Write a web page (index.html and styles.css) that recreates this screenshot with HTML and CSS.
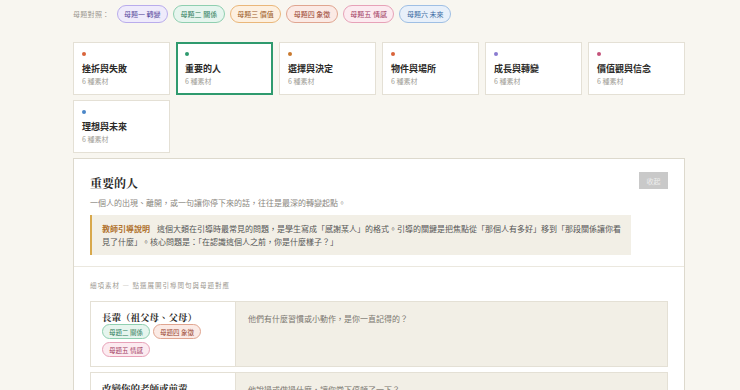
FILE: index.html
```html
<!DOCTYPE html>
<html lang="zh-Hant">
<head>
  <meta charset="UTF-8" />
  <title>素材分類</title>
  <link rel="stylesheet" href="styles.css">
</head>
<body>

<div class="page">

  <div class="legend">
    <span class="legend-label">母題對照：</span>
    <span class="chip m1">母題一 轉變</span>
    <span class="chip m2">母題二 關係</span>
    <span class="chip m3">母題三 價值</span>
    <span class="chip m4">母題四 象徵</span>
    <span class="chip m5">母題五 情感</span>
    <span class="chip m6">母題六 未來</span>
  </div>

  <div class="cat-grid">
    <div class="cat-card">
      <span class="dot dot-red"></span>
      <div class="cat-title">挫折與失敗</div>
      <div class="cat-sub">6 種素材</div>
    </div>
    <div class="cat-card active">
      <span class="dot dot-green"></span>
      <div class="cat-title">重要的人</div>
      <div class="cat-sub">6 種素材</div>
    </div>
    <div class="cat-card">
      <span class="dot dot-orange"></span>
      <div class="cat-title">選擇與決定</div>
      <div class="cat-sub">6 種素材</div>
    </div>
    <div class="cat-card">
      <span class="dot dot-red"></span>
      <div class="cat-title">物件與場所</div>
      <div class="cat-sub">6 種素材</div>
    </div>
    <div class="cat-card">
      <span class="dot dot-purple"></span>
      <div class="cat-title">成長與轉變</div>
      <div class="cat-sub">6 種素材</div>
    </div>
    <div class="cat-card">
      <span class="dot dot-pink"></span>
      <div class="cat-title">價值觀與信念</div>
      <div class="cat-sub">6 種素材</div>
    </div>
    <div class="cat-card">
      <span class="dot dot-blue"></span>
      <div class="cat-title">理想與未來</div>
      <div class="cat-sub">6 種素材</div>
    </div>
  </div>

  <section class="panel">
    <div class="panel-head">
      <div class="head-main">
        <h2 class="panel-title">重要的人</h2>
        <p class="panel-desc">一個人的出現、離開，或一句讓你停下來的話，往往是最深的轉變起點。</p>
        <div class="note"><strong class="note-label">教師引導說明</strong><span class="note-text">這個大類在引導時最常見的問題，是學生寫成「感謝某人」的格式。引導的關鍵是把焦點從「那個人有多好」移到「那段關係讓你看見了什麼」。核心問題是：「在認識這個人之前，你是什麼樣子？」</span></div>
      </div>
      <button class="close-btn">收起</button>
    </div>

    <div class="panel-body">
      <div class="section-label">細項素材 — 點選展開引導問句與母題對應</div>

      <div class="item">
        <div class="item-left">
          <div class="item-title">長輩（祖父母、父母）</div>
          <div class="item-chips">
            <span class="chip small m2">母題二 關係</span>
            <span class="chip small m4">母題四 象徵</span>
            <span class="chip small m5">母題五 情感</span>
          </div>
        </div>
        <div class="item-right">他們有什麼習慣或小動作，是你一直記得的？</div>
      </div>

      <div class="item">
        <div class="item-left">
          <div class="item-title">改變你的老師或前輩</div>
          <div class="item-chips">
            <span class="chip small m1">母題一 轉變</span>
            <span class="chip small m2">母題二 關係</span>
          </div>
        </div>
        <div class="item-right">他說過或做過什麼，讓你當下停頓了一下？</div>
      </div>
    </div>
  </section>

</div>

</body>
</html>
```

FILE: styles.css
```css
:root {
  --sans: "Noto Sans CJK TC", "Noto Sans", sans-serif;
  --serif: "Noto Serif CJK TC", "Liberation Serif", "Noto Sans CJK TC", serif;
  --bg: #f8f6f0;
  --line: #e4e0d5;
  --muted: #8a8680;
  --ink: #2b2a28;
  --cream: #f2efe6;
}
body {
  margin: 0;
  background: var(--bg);
  font-family: var(--sans);
  color: var(--ink);
}
.page {
  width: 612px;
  padding: 5px 0 0 73px;
}

/* legend */
.legend {
  display: flex;
  align-items: center;
  gap: 5px;
  height: 18px;
}
.legend-label {
  font-size: 7px;
  color: #9c9890;
  margin-right: 2px;
  letter-spacing: 0.3px;
}
.chip {
  display: inline-flex;
  align-items: center;
  height: 18px;
  box-sizing: border-box;
  padding: 0 6.5px;
  border: 1px solid;
  border-radius: 10px;
  font-size: 7px;
  white-space: nowrap;
}
.chip.small {
  height: 15px;
  padding: 0 6px;
  font-size: 6.5px;
}
.m1 { background: #efebfb; border-color: #b9acec; color: #5b4b9e; }
.m2 { background: #e6f5ee; border-color: #8fcfb0; color: #2e7d5a; }
.m3 { background: #fdf0e0; border-color: #eab77a; color: #9a5a1e; }
.m4 { background: #fbeae5; border-color: #e0a590; color: #9a4530; }
.m5 { background: #fcebf0; border-color: #e7a2b8; color: #a23c62; }
.m6 { background: #e8f0fa; border-color: #9fbfe4; color: #3a6aa3; }

/* categories */
.cat-grid {
  display: grid;
  grid-template-columns: repeat(6, 1fr);
  gap: 5px 6px;
  margin-top: 19px;
}
.cat-card {
  height: 53px;
  box-sizing: border-box;
  padding: 9px 8px 0;
  background: #fff;
  border: 1px solid var(--line);
}
.cat-card.active {
  border: 2px solid #2f9a6e;
  padding: 8px 7px 0;
}
.dot {
  display: block;
  width: 4px;
  height: 4px;
  border-radius: 50%;
  margin-bottom: 6px;
}
.dot-red { background: #d9643a; }
.dot-green { background: #2f9a6e; }
.dot-orange { background: #c9792f; }
.dot-purple { background: #8a7bd0; }
.dot-pink { background: #c4527a; }
.dot-blue { background: #4a86c8; }
.cat-title {
  font-size: 9px;
  font-weight: 700;
  line-height: 13px;
}
.cat-sub {
  font-size: 7px;
  color: #a29e97;
  line-height: 11px;
  margin-top: 1px;
}

/* panel */
.panel {
  margin-top: 5px;
  background: #fff;
  border: 1px solid #ddd9cd;
}
.panel-head {
  display: flex;
  align-items: flex-start;
  gap: 8px;
  padding: 13px 16px 11px 16px;
  border-bottom: 1px solid #ebe8df;
}
.head-main {
  flex: 1;
}
.panel-title {
  margin: 0;
  font-family: var(--serif);
  font-size: 12px;
  font-weight: 700;
  line-height: 22px;
}
.panel-desc {
  margin: 2px 0 5px;
  font-size: 8px;
  line-height: 14px;
  color: var(--muted);
}
.note {
  background: var(--cream);
  border-left: 2px solid #d8a84c;
  padding: 7px 6px 7px 10px;
  font-size: 8px;
  line-height: 13px;
  color: #555;
}
.note-label {
  color: #b0722e;
  font-weight: 700;
  padding-right: 7px;
}
.close-btn {
  width: 29px;
  height: 17px;
  padding: 0;
  border: none;
  background: #c9c9c9;
  color: #eee;
  font-family: inherit;
  font-size: 7px;
}

.panel-body {
  padding: 13px 16px 20px 16px;
}
.section-label {
  font-size: 6.5px;
  letter-spacing: 1px;
  color: #9c9890;
  line-height: 11px;
  margin-bottom: 10px;
}
.item {
  display: flex;
  border: 1px solid var(--line);
  margin-bottom: 5px;
}
.item-left {
  width: 122px;
  padding: 8px 11px 9px 11px;
  background: #fff;
  border-right: 1px solid var(--line);
}
.item-title {
  font-family: var(--serif);
  font-size: 9.5px;
  font-weight: 700;
  line-height: 14px;
}
.item-chips {
  display: flex;
  flex-wrap: wrap;
  gap: 3px;
}
.item-right {
  flex: 1;
  background: var(--cream);
  padding: 10px 12px;
  font-size: 8px;
  line-height: 14px;
  color: #7a766f;
}
```
